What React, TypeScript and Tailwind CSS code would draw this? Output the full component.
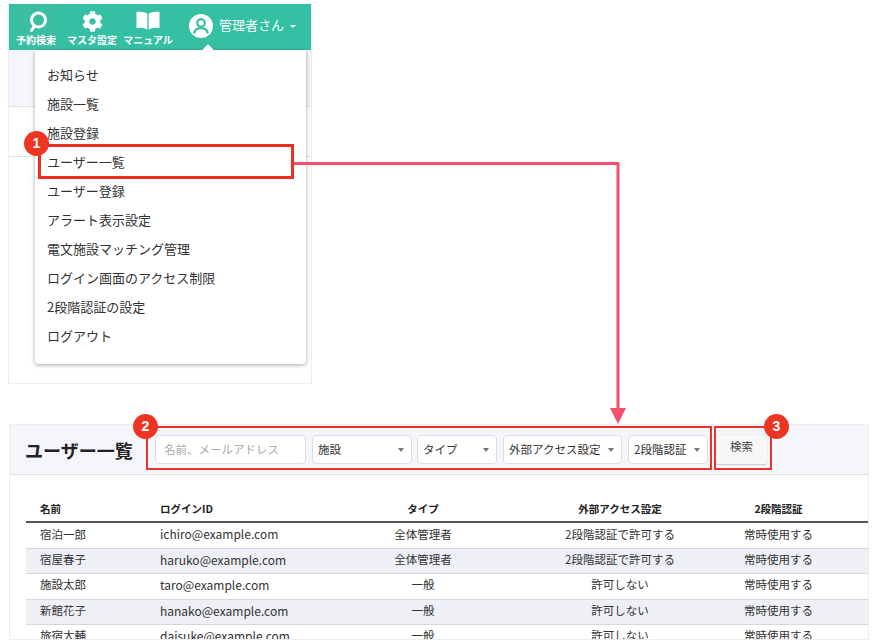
import { FaCog } from 'react-icons/fa'

const jp = "font-['Noto_Sans_CJK_JP','Noto_Sans',sans-serif]"

const menuItems = [
  'お知らせ',
  '施設一覧',
  '施設登録',
  'ユーザー一覧',
  'ユーザー登録',
  'アラート表示設定',
  '電文施設マッチング管理',
  'ログイン画面のアクセス制限',
  '2段階認証の設定',
  'ログアウト',
]

const users = [
  ['宿泊一郎', 'ichiro@example.com', '全体管理者', '2段階認証で許可する', '常時使用する'],
  ['宿屋春子', 'haruko@example.com', '全体管理者', '2段階認証で許可する', '常時使用する'],
  ['施設太郎', 'taro@example.com', '一般', '許可しない', '常時使用する'],
  ['新館花子', 'hanako@example.com', '一般', '許可しない', '常時使用する'],
  ['旅宿大輔', 'daisuke@example.com', '一般', '許可しない', '常時使用する'],
]

const filters = [
  { label: '施設', box: 'ml-[6px] w-[100px]' },
  { label: 'タイプ', box: 'ml-[5px] w-[80px]' },
  { label: '外部アクセス設定', box: 'ml-[6px] w-[119px]' },
  { label: '2段階認証', box: 'ml-[6px] w-[80px]' },
]

const Badge = ({ n, className }: { n: number; className: string }) => (
  <span
    className={`absolute flex h-[25px] w-[25px] items-center justify-center rounded-full bg-[#ee3524] text-[14px] font-bold text-white font-['Liberation_Sans',sans-serif] ${className}`}
  >
    {n}
  </span>
)

const NavItem = ({ label, icon, active }: { label: string; icon: React.ReactNode; active?: boolean }) => (
  <div className={`flex h-full flex-col items-center justify-end pb-[3px] ${active ? 'bg-[#3cbea3]' : ''}`}>
    <div className="flex h-[28px] items-end justify-center pb-[1px]">{icon}</div>
    <span className="text-[10px] leading-[14px] font-bold whitespace-nowrap text-white">{label}</span>
  </div>
)

const Header = () => (
  <header className="relative flex h-[46px] items-stretch bg-[#35c0a3] pl-[5px]">
    <div className="w-[44px]">
      <NavItem
        active
        label="予約検索"
        icon={
          <svg width="24" height="26" viewBox="0 0 24 26" fill="none">
            <circle cx="14.5" cy="14" r="7" stroke="white" strokeWidth="3" />
            <path d="M10 20.5 L7.5 24.5" stroke="white" strokeWidth="3" strokeLinecap="round" />
          </svg>
        }
      />
    </div>
    <div className="ml-[10px] w-[48px]">
      <NavItem label="マスタ設定" icon={<FaCog className="text-white" size={21} />} />
    </div>
    <div className="ml-[8px] w-[48px]">
      <NavItem
        label="マニュアル"
        icon={
          <svg width="24" height="22" viewBox="0 0 24 22" fill="white">
            <path d="M11.3 3.6C8.5 1.8 4 1.2 0.5 2V18.2C4 17.4 8.5 18 11.3 19.8Z" />
            <path d="M12.7 3.6C15.5 1.8 20 1.2 23.5 2V18.2C20 17.4 15.5 18 12.7 19.8Z" />
          </svg>
        }
      />
    </div>
    <div className="ml-[17px] flex items-center gap-[6px] pb-[2px] text-white">
      <svg width="24" height="24" viewBox="0 0 24 24" fill="none">
        <circle cx="12" cy="12" r="12" fill="white" />
        <circle cx="12" cy="9" r="3.8" stroke="#35c0a3" strokeWidth="2.2" />
        <path d="M5.2 19.5c.6-3.8 3.2-5.4 6.8-5.4s6.2 1.6 6.8 5.4" stroke="#35c0a3" strokeWidth="2.2" />
      </svg>
      <span className="pb-[3px] text-[13px] leading-none">管理者さん</span>
      <span className="h-0 w-0 border-x-[3px] border-t-[3px] border-x-transparent border-t-white" />
    </div>
    <span className="absolute top-[42px] left-[195px] z-10 h-[8px] w-[8px] rotate-45 bg-white" />
  </header>
)

const MenuPanel = () => (
  <section className="relative h-[380px] w-[304px] border border-t-0 border-[#eeeeee] bg-white">
    <Header />
    <div className="h-[57px] border-b border-[#dfe1e6] bg-[#f4f6fb]" />
    <div className="h-[50px] border-b border-[#dfe1e6]" />
    <nav className="absolute top-[46px] left-[26px] h-[314px] w-[271px] rounded-b-[4px] bg-white pt-[10px] pl-[12px] shadow-[0_1px_4px_rgba(0,0,0,0.35)]">
      {menuItems.map((item) => (
        <div key={item} className="h-[29px] text-[13px] leading-[29px] text-[#333333]">
          {item}
        </div>
      ))}
    </nav>
  </section>
)

const Caret = () => (
  <span className="h-0 w-0 shrink-0 border-x-[3px] border-t-[4px] border-x-transparent border-t-[#777777]" />
)

const ListPanel = () => (
  <section className="h-[216px] w-[860px] overflow-hidden border border-[#eeeeee] bg-white">
    <div className="flex h-[50px] items-center border-b border-[#dfe1e6] bg-[#f4f6fb] pl-[15px]">
      <h2 className="w-[130px] text-[18px] leading-none font-bold text-[#222222]">ユーザー一覧</h2>
      <div className="flex h-[29px] w-[151px] items-center rounded-[4px] border border-[#dcdee3] bg-white pl-[8px] text-[11.5px] text-[#aaaaaa]">
        名前、メールアドレス
      </div>
      {filters.map((f) => (
        <div
          key={f.label}
          className={`flex h-[29px] items-center justify-between rounded-[4px] border border-[#dcdee3] bg-white pr-[7px] pl-[5px] text-[11.5px] text-[#333333] ${f.box}`}
        >
          <span className="whitespace-nowrap">{f.label}</span>
          <Caret />
        </div>
      ))}
      <div className="ml-[8px] flex h-[30px] w-[51px] items-center justify-center rounded-[3px] border-b border-[#cfd1d6] bg-[#f7f7f7] pb-[4px] text-[11.5px] text-[#444444] shadow-[0_0_1px_rgba(0,0,0,0.3)]">
        検索
      </div>
    </div>
    <div className="pt-[21px] pl-[16px]">
      <table className="w-[843px] table-fixed border-collapse text-[11.5px] text-[#333333]">
        <colgroup>
          <col className="w-[120px]" />
          <col className="w-[194px]" />
          <col className="w-[166px]" />
          <col className="w-[228px]" />
          <col className="w-[135px]" />
        </colgroup>
        <thead>
          <tr className="h-[26px] border-b-2 border-[#555555] text-[10.5px] font-bold text-[#222222]">
            <th className="pl-[14px] text-left">名前</th>
            <th className="pl-[14px] text-left">ログインID</th>
            <th>タイプ</th>
            <th>外部アクセス設定</th>
            <th className="pr-[46px]">2段階認証</th>
          </tr>
        </thead>
        <tbody>
          {users.map((u, i) => (
            <tr
              key={u[1]}
              className={`border-b border-[#d5d7db] ${i % 2 === 1 ? 'h-[25px] bg-[#eef0f5]' : 'h-[26px]'}`}
            >
              <td className="pb-[2px] pl-[14px]">{u[0]}</td>
              <td className="pb-[2px] pl-[14px] text-[12px]">{u[1]}</td>
              <td className="pb-[2px] text-center">{u[2]}</td>
              <td className="pb-[2px] text-center">{u[3]}</td>
              <td className="pr-[46px] pb-[2px] text-center">{u[4]}</td>
            </tr>
          ))}
        </tbody>
      </table>
    </div>
  </section>
)

export default function App() {
  return (
    <main className={`relative h-[644px] w-[880px] overflow-hidden bg-white pt-[4px] pl-[8px] ${jp}`}>
      <MenuPanel />
      <div className="mt-[40px] ml-[1px]">
        <ListPanel />
      </div>

      {/* 注釈 */}
      <div className="absolute top-[144px] left-[38px] h-[35px] w-[256px] border-[3px] border-[#ee2e24]" />
      <Badge n={1} className="top-[131px] left-[24px]" />
      <div className="absolute top-[426px] left-[146px] h-[44px] w-[566px] border-[2px] border-[#e8342a]" />
      <Badge n={2} className="top-[414px] left-[133px]" />
      <div className="absolute top-[426px] left-[714px] h-[44px] w-[58px] border-[2px] border-[#e8342a]" />
      <Badge n={3} className="top-[414px] left-[764px]" />

      <svg className="absolute top-0 left-0" width="880" height="644" fill="none">
        <path d="M294 163.5 H618 V410" stroke="#f4506e" strokeWidth="3" />
        <path d="M610 408 H626 L618 424 Z" fill="#f4506e" />
      </svg>
    </main>
  )
}
